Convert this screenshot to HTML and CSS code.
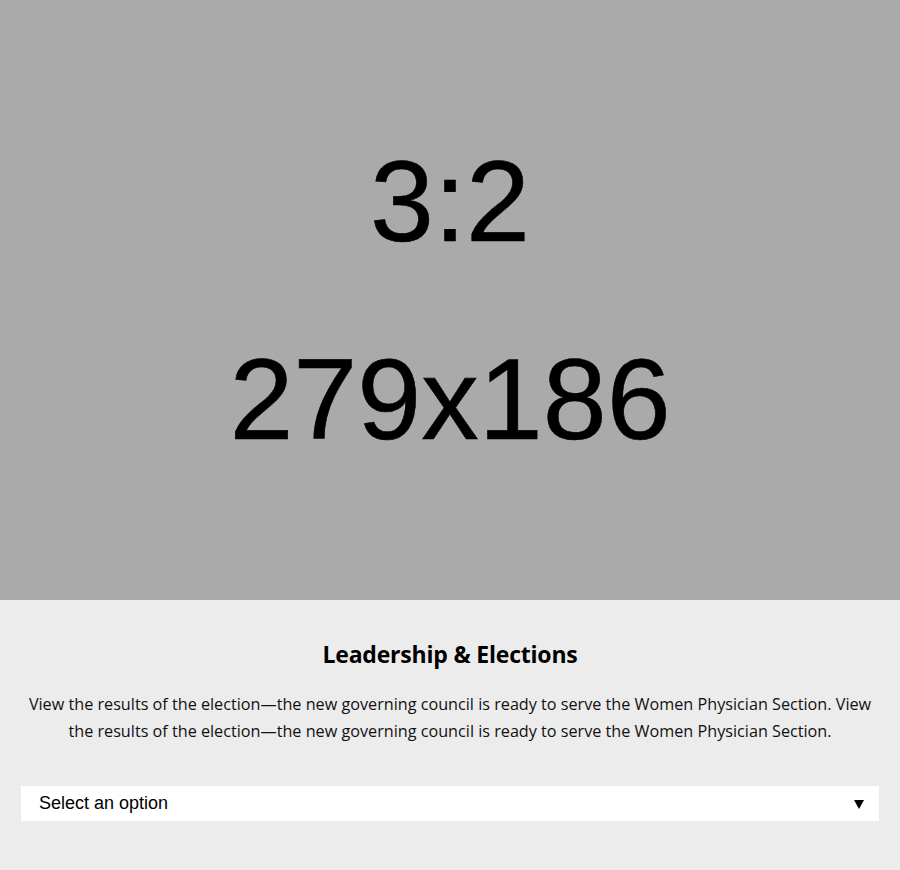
FILE: index.html
```html
<!DOCTYPE html>
<html lang="en">
<head>
<meta charset="utf-8">
<title>Leadership &amp; Elections</title>
<link rel="stylesheet" href="styles.css">
</head>
<body>
<div class="card">
  <div class="placeholder">
    <div class="ratio">3:2</div>
    <div class="dims">279x186</div>
  </div>
  <div class="content">
    <h2 class="title">Leadership &amp; Elections</h2>
    <p class="desc">View the results of the election—the new governing council is ready to serve the Women Physician Section. View the results of the election—the new governing council is ready to serve the Women Physician Section.</p>
    <div class="select">
      <span class="select-label">Select an option</span>
      <svg class="select-arrow" width="10" height="9" viewBox="0 0 10 9"><path d="M0 0H10L5 9Z" fill="#000"/></svg>
    </div>
  </div>
</div>
</body>
</html>
```
FILE: styles.css
```css
html, body {
  margin: 0;
  padding: 0;
  background: #ececec;
}
.card {
  width: 900px;
  height: 870px;
  background: #ececec;
}
.placeholder {
  height: 600px;
  background: #aaaaaa;
  display: flex;
  flex-direction: column;
  align-items: center;
  justify-content: center;
  gap: 68px;
  font-family: "Liberation Sans", Arial, sans-serif;
  font-size: 115px;
  line-height: 130px;
  color: #000;
  -webkit-text-stroke: 0.6px #000;
}
.content {
  padding: 38px 21px 0;
  text-align: center;
}
.title {
  margin: 0;
  font-family: "Open Sans", sans-serif;
  font-weight: 700;
  font-size: 23px;
  line-height: 32px;
  color: #000;
  letter-spacing: -0.2px;
}
.desc {
  margin: 21px auto 0;
  font-family: "Open Sans", sans-serif;
  font-size: 16.2px;
  line-height: 27px;
  color: #111;
  max-width: 856px;
}
.select {
  margin-top: 41px;
  height: 35px;
  background: #fff;
  display: flex;
  align-items: center;
  justify-content: space-between;
  padding: 0 15px 0 18px;
  text-align: left;
}
.select-label {
  font-family: "Liberation Sans", Arial, sans-serif;
  font-size: 18px;
  color: #000;
}
.select-arrow {
  display: block;
  margin-top: 2px;
}
```
